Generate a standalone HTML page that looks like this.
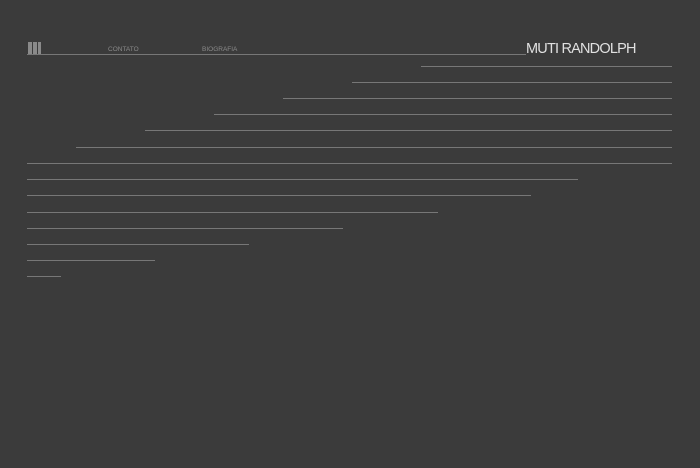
<!DOCTYPE html>
<html><head><style>
html,body{margin:0;padding:0;background:#3b3b3b;width:700px;height:468px;overflow:hidden;position:relative;font-family:"Liberation Sans",sans-serif}
.l{position:absolute;height:1px;background:#777}
.t{position:absolute;font-size:6.5px;color:#8a8a8a;letter-spacing:0px}
.b{position:absolute;top:42px;width:4px;height:12px;background:#8a8a8a}
</style></head><body>
<div class="b" style="left:28px"></div><div class="b" style="left:33px"></div><div class="b" style="left:38px;width:3px"></div>
<div class="t" style="left:108px;top:46px">CONTATO</div>
<div class="t" style="left:202px;top:46px">BIOGRAFIA</div>
<div style="position:absolute;left:526px;top:41px;font-size:14.5px;color:#e0e0e0;letter-spacing:-0.8px">MUTI RANDOLPH</div>
<div class="l" style="left:27px;top:54px;width:499px"></div>
<div class="l" style="left:421px;top:66px;width:251px"></div>
<div class="l" style="left:352px;top:82px;width:320px"></div>
<div class="l" style="left:283px;top:98px;width:389px"></div>
<div class="l" style="left:214px;top:114px;width:458px"></div>
<div class="l" style="left:145px;top:130px;width:527px"></div>
<div class="l" style="left:76px;top:147px;width:596px"></div>
<div class="l" style="left:27px;top:163px;width:645px"></div>
<div class="l" style="left:27px;top:179px;width:551px"></div>
<div class="l" style="left:27px;top:195px;width:504px"></div>
<div class="l" style="left:27px;top:212px;width:411px"></div>
<div class="l" style="left:27px;top:228px;width:316px"></div>
<div class="l" style="left:27px;top:244px;width:222px"></div>
<div class="l" style="left:27px;top:260px;width:128px"></div>
<div class="l" style="left:27px;top:276px;width:34px"></div>
</body></html>
